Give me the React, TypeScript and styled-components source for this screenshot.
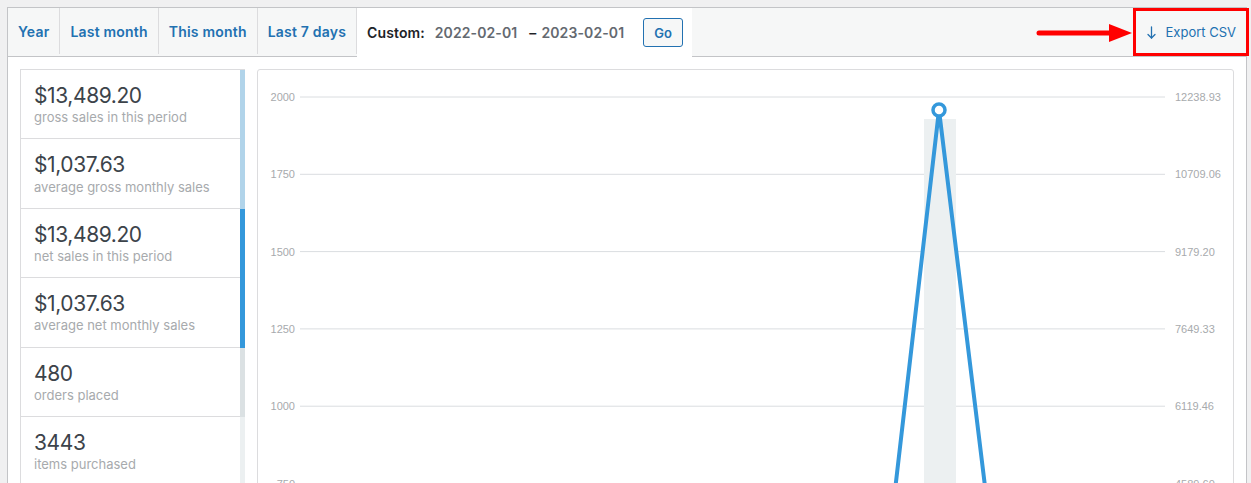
import React from 'react';
import styled, { createGlobalStyle } from 'styled-components';

const GlobalStyle = createGlobalStyle`
  html, body {
    margin: 0;
    overflow: hidden;
    background: #f0f0f1;
    font-family: Inter, "Liberation Sans", Arial, sans-serif;
  }
  * {
    box-sizing: border-box;
  }
`;

const legendItems = [
  { id: 1, value: '$13,489.20', label: 'gross sales in this period', color: '#b1d4ea' },
  { id: 2, value: '$1,037.63', label: 'average gross monthly sales', color: '#b1d4ea' },
  { id: 3, value: '$13,489.20', label: 'net sales in this period', color: '#3498db' },
  { id: 4, value: '$1,037.63', label: 'average net monthly sales', color: '#3498db' },
  { id: 5, value: '480', label: 'orders placed', color: '#dbe1e3' },
  { id: 6, value: '3443', label: 'items purchased', color: '#ecf0f1' },
];

const tabs = ['Year', 'Last month', 'This month', 'Last 7 days'];

const leftTicks = ['2000', '1750', '1500', '1250', '1000', '750', '500', '250', '0'];
const rightTicks = ['12238.93', '10709.06', '9179.20', '7649.33', '6119.46', '4589.60', '3059.73', '1529.87', '0.00'];

const Page = styled.div`
  padding: 7px 4px 0 7px;
  min-height: 100vh;
`;

const Postbox = styled.div`
  background: #fff;
  border: 1px solid #c3c4c7;
`;

const TabBar = styled.div`
  display: flex;
  align-items: stretch;
  height: 49px;
  background: #f6f7f7;
  border-bottom: 1px solid #c3c4c7;
`;

const Tab = styled.a`
  display: flex;
  align-items: center;
  padding: 0 10px;
  border-right: 1px solid #dcdcde;
  margin-bottom: 2px;
  font-size: 14px;
  font-weight: 600;
  letter-spacing: 0.2px;
  color: #2271b1;
  text-decoration: none;
  cursor: pointer;
`;

const CustomTab = styled.div`
  display: flex;
  align-items: center;
  padding: 0 9px 0 10px;
  margin-bottom: -1px;
  background: #fff;
  font-size: 14px;
  font-weight: 600;
  letter-spacing: 0.1px;
`;

const CustomLabel = styled.span`
  color: #1d2327;
  margin-right: 10px;
`;

const DateValue = styled.span`
  color: #646970;
`;

const Dash = styled.span`
  color: #1d2327;
  margin: 0 5px 0 12px;
`;

const GoButton = styled.button`
  margin-left: 19px;
  width: 40px;
  height: 29px;
  padding: 0;
  border: 1px solid #2271b1;
  border-radius: 3px;
  background: #f6f7f7;
  color: #2271b1;
  font-family: inherit;
  font-size: 13px;
  font-weight: 600;
  cursor: pointer;
`;

const ExportWrap = styled.div`
  position: relative;
  margin-left: auto;
  margin-right: -3px;
  display: flex;
`;

const ExportLink = styled.a`
  display: flex;
  align-items: center;
  gap: 10px;
  padding: 0 10px 0 11px;
  border: 3px solid #ff0000;
  font-size: 13px;
  color: #2271b1;
  text-decoration: none;
  cursor: pointer;
`;

const PointerArrow = styled.svg`
  position: absolute;
  right: 100%;
  top: 15px;
  margin-right: 1px;
`;

const ReportBody = styled.div`
  display: flex;
  align-items: flex-start;
  gap: 12px;
  padding: 12px;
`;

const Legend = styled.ul`
  width: 225px;
  flex: none;
  margin: 0;
  padding: 0;
  list-style: none;
  border: 1px solid #dcdcde;
  border-right: 0;
`;

const LegendItem = styled.li<{ $color: string }>`
  padding: 13px;
  border-right: 5px solid ${(props) => props.$color};
  box-shadow: inset 0 -1px 0 0 #dcdcde;
  font-size: 13px;
  line-height: 18.2px;
  color: #a7aaad;
`;

const LegendValue = styled.strong`
  display: block;
  font-size: 21px;
  line-height: 25.2px;
  font-weight: 400;
  color: #3c434a;
  letter-spacing: -0.4px;
`;

const ChartContainer = styled.div`
  flex: 1;
  min-width: 0;
  padding: 12px;
  border: 1px solid #dcdcde;
  border-radius: 3px;
  background: #fff;
`;

const ChartPlaceholder = styled.div`
  width: 100%;
  height: 650px;
`;

const ChartSvg = styled.svg`
  display: block;
  overflow: visible;
`;

const TickText = styled.text`
  font-family: "Liberation Sans", Arial, sans-serif;
  font-size: 11px;
  fill: #a7aaad;
`;

function DownArrow() {
  return (
    <svg width="9" height="13" viewBox="0 0 9 13" fill="none" stroke="#2271b1" strokeWidth="1.3" strokeLinecap="round" strokeLinejoin="round">
      <path d="M4.5 1v11" />
      <path d="M1 8.5l3.5 3.5 3.5-3.5" />
    </svg>
  );
}

function SalesChart() {
  const top = 15;
  const step = 77.3;
  const zero = top + step * 8;
  const peak = { x: 669, y: 28 };
  const points = [
    [30, zero],
    [599, zero],
    [peak.x, peak.y],
    [743, zero],
    [895, zero],
  ]
    .map((p) => p.join(','))
    .join(' ');

  return (
    <ChartSvg width="950" height="650" viewBox="0 0 950 650">
      {leftTicks.map((tick, i) => {
        const y = top + step * i;
        return (
          <g key={tick}>
            <line x1="30" x2="895" y1={y} y2={y} stroke="#dadde0" strokeWidth="1" />
            <TickText x="25" y={y + 4} textAnchor="end">
              {tick}
            </TickText>
            <TickText x="905" y={y + 4}>
              {rightTicks[i]}
            </TickText>
          </g>
        );
      })}
      <rect x="654" y="37" width="32" height={zero - 37} fill="#ecf0f1" />
      <polyline points={points} fill="none" stroke="#3498db" strokeWidth="4" strokeLinejoin="round" />
      <circle cx={peak.x} cy={peak.y} r="6" fill="#fff" stroke="#3498db" strokeWidth="3.5" />
    </ChartSvg>
  );
}

export default function App() {
  return (
    <Page>
      <GlobalStyle />
      <Postbox>
        <TabBar>
          {tabs.map((tab) => (
            <Tab key={tab}>{tab}</Tab>
          ))}
          <CustomTab>
            <CustomLabel>Custom:</CustomLabel>
            <DateValue>2022-02-01</DateValue>
            <Dash>–</Dash>
            <DateValue>2023-02-01</DateValue>
            <GoButton>Go</GoButton>
          </CustomTab>
          <ExportWrap>
            <PointerArrow width="96" height="20" viewBox="0 0 96 20">
              <line x1="3" y1="10" x2="76" y2="10" stroke="#ff0000" strokeWidth="5" strokeLinecap="round" />
              <polygon points="73,1 96,10 73,19" fill="#ff0000" />
            </PointerArrow>
            <ExportLink>
              <DownArrow />
              Export CSV
            </ExportLink>
          </ExportWrap>
        </TabBar>
        <ReportBody>
          <Legend>
            {legendItems.map((item) => (
              <LegendItem key={item.id} $color={item.color}>
                <LegendValue>{item.value}</LegendValue>
                {item.label}
              </LegendItem>
            ))}
          </Legend>
          <ChartContainer>
            <ChartPlaceholder>
              <SalesChart />
            </ChartPlaceholder>
          </ChartContainer>
        </ReportBody>
      </Postbox>
    </Page>
  );
}
